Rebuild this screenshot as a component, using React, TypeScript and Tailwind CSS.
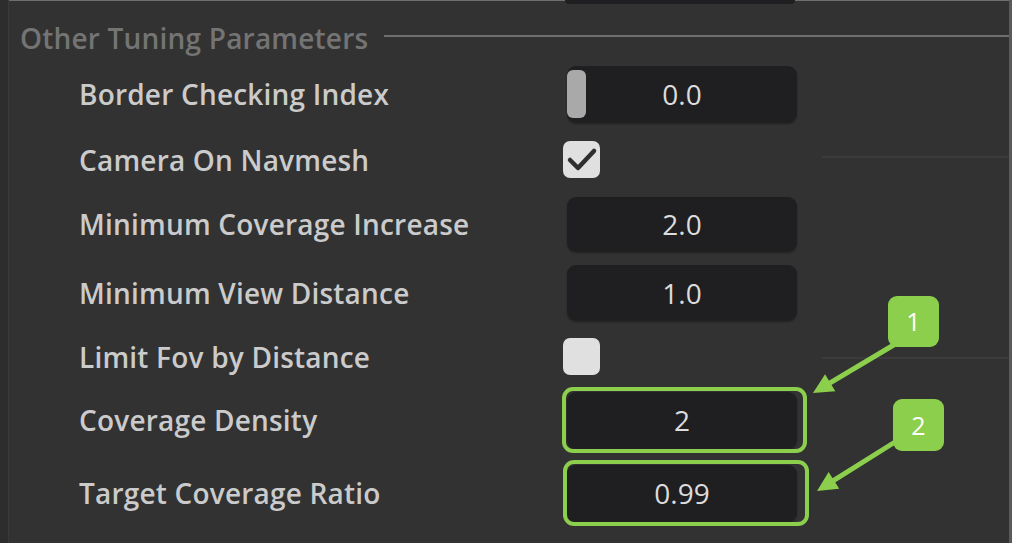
import React from 'react';

const FONT = { fontFamily: '"Open Sans", "Noto Sans", sans-serif' };

type Arrow = { x1: number; y1: number; x2: number; y2: number };

function arrowHead({ x1, y1, x2, y2 }: Arrow) {
  const dx = x2 - x1;
  const dy = y2 - y1;
  const len = Math.hypot(dx, dy);
  const ux = dx / len;
  const uy = dy / len;
  const bx = x2 - ux * 20;
  const by = y2 - uy * 20;
  const nx = -uy * 10;
  const ny = ux * 10;
  return `${x2},${y2} ${bx + nx},${by + ny} ${bx - nx},${by - ny}`;
}

const arrows: Arrow[] = [
  { x1: 897, y1: 343, x2: 813, y2: 393 },
  { x1: 895, y1: 442, x2: 817, y2: 491 },
];

function Field({ value, slider, h = 'h-[56px]' }: { value: string; slider?: boolean; h?: string }) {
  return (
    <div className={`relative w-[230px] ${h} rounded-[9px] bg-[#1f1f22] shadow-[0_2px_2px_rgba(0,0,0,0.35)] flex items-center justify-center`}>
      {slider && (
        <div className="absolute left-0 top-[4px] bottom-[4px] w-[19px] rounded-[6px] bg-[#a9a9a9]" />
      )}
      <span className="text-[28px] text-[#dcdcdc] leading-none">{value}</span>
    </div>
  );
}

function Checkbox({ checked }: { checked?: boolean }) {
  return (
    <div className="w-[37px] h-[37px] rounded-[7px] bg-[#e0e0e0] flex items-center justify-center shrink-0">
      {checked && (
        <svg width="37" height="37" viewBox="0 0 37 37">
          <path d="M7 19 L15 27 L31 10" fill="none" stroke="#2e2e2e" strokeWidth="4.5" strokeLinecap="round" strokeLinejoin="round" />
        </svg>
      )}
    </div>
  );
}

function Highlight({ children, className }: { children: React.ReactNode; className: string }) {
  return (
    <div className="relative">
      {children}
      <div className={`absolute border-[4px] border-[#8ccf4d] rounded-[11px] pointer-events-none ${className}`} />
    </div>
  );
}

function Label({ text }: { text: string }) {
  return (
    <div className="w-[488px] shrink-0 text-[28px] font-semibold text-[#cbcbcb] leading-none tracking-[0.2px]">
      {text}
    </div>
  );
}

export default function App() {
  return (
    <div className="relative w-[1012px] h-[543px] overflow-hidden bg-[#323232] flex" style={FONT}>
      {/* left gutter */}
      <div className="w-[9px] shrink-0 bg-[#2d2d2d] border-r border-[#3a3a3a]" />

      <div className="flex-1 flex flex-col border-t border-[#6e6e6e]">
        {/* bottom of previous field */}
        <div className="-mt-px ml-[556px] w-[230px] h-[4px] rounded-b-[6px] bg-[#1f1f22]" />

        {/* section header */}
        <div className="mt-[15px] h-[38px] flex items-center pl-[11px]">
          <span className="text-[28px] font-semibold text-[#747474] leading-none tracking-[0.2px]">Other Tuning Parameters</span>
          <div className="ml-[16px] flex-1 h-[2px] bg-[#6f6f6f] -mt-[4px]" />
        </div>

        <div className="flex flex-col pl-[70px]">
          <div className="mt-[9px] h-[56px] flex items-center">
            <Label text="Border Checking Index" />
            <Field value="0.0" slider />
          </div>

          <div className="mt-[19px] h-[37px] flex items-center">
            <Label text="Camera On Navmesh" />
            <div className="-ml-[4px]">
              <Checkbox checked />
            </div>
            <div className="ml-[222px] flex-1 h-[2px] bg-[#3b3b3b] -mt-[6px]" />
          </div>

          <div className="mt-[19px] h-[54px] flex items-center">
            <Label text="Minimum Coverage Increase" />
            <Field value="2.0" h="h-[54px]" />
          </div>

          <div className="mt-[14px] h-[55px] flex items-center">
            <Label text="Minimum View Distance" />
            <Field value="1.0" h="h-[55px]" />
          </div>

          <div className="mt-[18px] h-[37px] flex items-center">
            <Label text="Limit Fov by Distance" />
            <div className="-ml-[4px]">
              <Checkbox />
            </div>
            <div className="ml-[222px] flex-1 h-[2px] bg-[#3b3b3b] mt-[2px]" />
          </div>

          <div className="mt-[17px] h-[56px] flex items-center">
            <Label text="Coverage Density" />
            <Highlight className="-left-[5px] -right-[10px] -top-[5px] -bottom-[5px]">
              <Field value="2" />
            </Highlight>
          </div>

          <div className="mt-[17px] h-[56px] flex items-center">
            <Label text="Target Coverage Ratio" />
            <Highlight className="-left-[4px] -right-[12px] -top-[5px] -bottom-[5px]">
              <Field value="0.99" />
            </Highlight>
          </div>
        </div>
      </div>

      {/* right edge */}
      <div className="w-[3px] shrink-0 bg-[#5a5a5a]" />

      {/* annotation badges */}
      <div className="absolute left-[888px] top-[296px] w-[51px] h-[51px] rounded-[9px] bg-[#8ccf4d] flex items-center justify-center text-white text-[25px] leading-none">
        1
      </div>
      <div className="absolute left-[893px] top-[399px] w-[51px] h-[52px] rounded-[9px] bg-[#8ccf4d] flex items-center justify-center text-white text-[25px] leading-none">
        2
      </div>

      {/* annotation arrows */}
      <svg className="absolute inset-0 pointer-events-none" width="1012" height="543" viewBox="0 0 1012 543">
        {arrows.map((a, i) => {
          const len = Math.hypot(a.x2 - a.x1, a.y2 - a.y1);
          const ex = a.x2 - ((a.x2 - a.x1) / len) * 16;
          const ey = a.y2 - ((a.y2 - a.y1) / len) * 16;
          return (
            <g key={i}>
              <line x1={a.x1} y1={a.y1} x2={ex} y2={ey} stroke="#8ccf4d" strokeWidth="5" />
              <polygon points={arrowHead(a)} fill="#8ccf4d" />
            </g>
          );
        })}
      </svg>
    </div>
  );
}
